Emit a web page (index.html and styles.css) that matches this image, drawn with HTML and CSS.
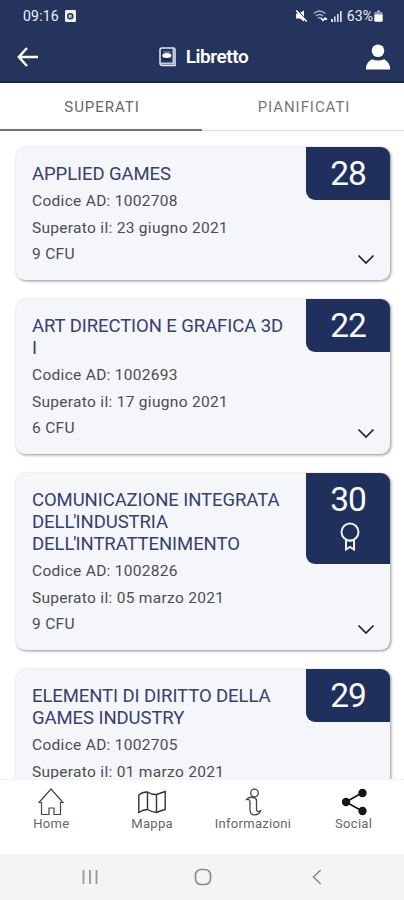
FILE: index.html
```html
<!DOCTYPE html>
<html lang="it">
<head>
<meta charset="utf-8">
<meta name="viewport" content="width=device-width, initial-scale=1">
<title>Libretto</title>
<link rel="stylesheet" href="styles.css">
</head>
<body>
<div class="app">
  <header class="header">
    <div class="status">
      <span class="time">09:16</span>
      <svg class="status-app" width="11" height="12" viewBox="0 0 11 12"><rect width="11" height="12" rx="1.2" fill="#edf0f8"/><circle cx="5.3" cy="6.2" r="2.5" fill="none" stroke="#25345c" stroke-width="1.5"/><circle cx="5.8" cy="6.2" r=".7" fill="#25345c"/></svg>
      <div class="status-right">
        <svg width="13" height="12" viewBox="0 0 13 12"><path d="M1 3.500h2.500L9 .5v11L5 8.500H1z" fill="#fff"/><path d="M2.500.5l10.500 11" stroke="#25345c" stroke-width="1.200"/><path d="M1.200.5l10.500 11" stroke="#fff" stroke-width="1.600"/></svg>
        <svg class="wifi" width="15" height="12" viewBox="0 0 15 12" fill="none" stroke="#aeb8cf" stroke-width="1.300"><path d="M.8 3.500Q6.500-1.500 12.300 3.500M3 6q3.500-3 7 0M5 8.300q1.500-1.400 3 0"/><path d="M8 8l2 2.500 2-2.500 2 1.500" stroke="#eef1f8" stroke-width="1.600"/></svg>
        <svg class="signal" width="11" height="12" viewBox="0 0 11 12" fill="#d6dcea"><path d="M0 9h2v3H0zM3 6.500h1.600V12H3zM6 4h1.600v8H6zM9 1h1.700v11H9z"/></svg>
        <span class="percent">63%</span>
        <svg class="battery" width="9" height="12" viewBox="0 0 9 12"><path d="M3 .5h3v2H3z" fill="#aeb8cf"/><rect x=".3" y="2" width="8.400" height="4" rx="1" fill="#8794b5"/><rect x=".3" y="4.500" width="8.400" height="7.300" rx="1" fill="#fff"/></svg>
      </div>
    </div>
    <div class="titlebar">
      <svg class="back" width="22" height="20" viewBox="0 0 22 20" fill="none" stroke="#fff" stroke-width="2.400"><path d="M10 1L1.800 10l8.200 9M2 10h19"/></svg>
      <div class="heading">
        <svg width="17" height="20" viewBox="0 0 17 20"><path d="M3 1h11.500q1.500 0 1.500 1.500V18.500H3.500Q1 18.500 1 16V3q0-2 2-2z" fill="#25345c" stroke="#e5e9f3" stroke-width="1.500"/><path d="M1.500 16.500H15M14.500 1v16" stroke="#c0c8db" stroke-width="2" fill="none"/><path d="M4.500 5h7" stroke="#9ba7c2"/><ellipse cx="7.800" cy="8.500" rx="4.500" ry="2.500" fill="#fff"/><path d="M4 12.200h8" stroke="#17234a" stroke-width="1.500"/></svg>
        <h1>Libretto</h1>
      </div>
      <svg class="user" width="24" height="26" viewBox="0 0 24 26" fill="#fff"><circle cx="12" cy="6.700" r="6.300"/><path d="M0 25.500v-2.500q1-5 6-7.800 6 2.500 12 0 5 2.800 6 7.800v2.500z"/></svg>
    </div>
  </header>
  <nav class="tabs">
    <div class="tab active"><span>SUPERATI</span></div>
    <div class="tab"><span>PIANIFICATI</span></div>
  </nav>
  <main class="list">
    <article class="card">
      <div class="info">
        <h2>APPLIED GAMES</h2>
        <p>Codice AD: 1002708</p><p>Superato il: 23 giugno 2021</p><p>9 CFU</p>
      </div>
      <div class="side">
        <div class="grade">28</div>
        <svg class="chevron" width="18" height="11" viewBox="0 0 18 11"><path d="M1.500 1.500L9 9l7.500-7.500"/></svg>
      </div>
    </article>
    <article class="card">
      <div class="info">
        <h2>ART DIRECTION E GRAFICA 3D<br>I</h2>
        <p>Codice AD: 1002693</p><p>Superato il: 17 giugno 2021</p><p>6 CFU</p>
      </div>
      <div class="side">
        <div class="grade">22</div>
        <svg class="chevron" width="18" height="11" viewBox="0 0 18 11"><path d="M1.500 1.500L9 9l7.500-7.500"/></svg>
      </div>
    </article>
    <article class="card">
      <div class="info">
        <h2>COMUNICAZIONE INTEGRATA<br>DEL<span class="elision">L'</span>INDUSTRIA<br>DEL<span class="elision">L'</span>INTRATTENIMENTO</h2>
        <p>Codice AD: 1002826</p><p>Superato il: 05 marzo 2021</p><p>9 CFU</p>
      </div>
      <div class="side">
        <div class="grade honors">30
          <svg class="ribbon" width="20" height="30" viewBox="0 0 20 30" fill="none" stroke="#edf0f8" stroke-width="2"><circle cx="10" cy="10" r="8.500"/><path d="M6 17.500v10l4-2.500 4 2.500V17.500"/><path d="M7.500 18.800h5" stroke-width="1.500"/></svg>
        </div>
        <svg class="chevron" width="18" height="11" viewBox="0 0 18 11"><path d="M1.500 1.500L9 9l7.500-7.500"/></svg>
      </div>
    </article>
    <article class="card">
      <div class="info">
        <h2>ELEMENTI DI DIRITTO DELLA<br>GAMES INDUSTRY</h2>
        <p>Codice AD: 1002705</p><p>Superato il: 01 marzo 2021</p>
      </div>
      <div class="side"><div class="grade">29</div></div>
    </article>
  </main>
  <nav class="bottom">
    <div class="item"><svg width="26" height="28" viewBox="0 0 26 28" fill="none" stroke="#444" stroke-width="1.200"><path d="M1 14.500L13 1l12 13.500h-2.500V26.500H16v-6.500h-5v6.500H3.500V14.500z"/></svg><span>Home</span></div>
    <div class="item"><svg width="28" height="28" viewBox="0 0 28 28" fill="none" stroke="#333" stroke-width="1.400"><path d="M.8 7q4-3.500 8.700-3 4.500 3 9 2.500Q23 5 27.200 3.500V21.500q-4 1-8.700 3-4.500-.5-9-3Q5 21.500.8 24.500zM9.500 4v17.500M18.500 6.500v18"/></svg><span>Mappa</span></div>
    <div class="item"><svg width="18" height="28" viewBox="0 0 18 28" fill="none" stroke="#444" stroke-width="1.300"><circle cx="10.500" cy="5" r="3.800"/><path d="M9 9.500Q4.500 8.500 2.500 11.500q3.500-.5 3.500 2v8.500q0 5 5 4.800 4 0 5.500-4-4 1.800-4-1.500v-8.500q0-3-3.500-3.300z"/></svg><span>Informazioni</span></div>
    <div class="item"><svg width="28" height="28" viewBox="0 0 28 28" fill="#151515"><path d="M22.500 4.500L6 14l17 9.500" fill="none" stroke="#151515" stroke-width="1.700"/><circle cx="22.500" cy="5" r="4.200"/><circle cx="6" cy="14" r="4.200"/><circle cx="22.500" cy="23" r="4.200"/></svg><span>Social</span></div>
  </nav>
  <footer class="system">
    <svg width="16" height="16" viewBox="0 0 16 16" stroke="#999" stroke-width="1.800"><path d="M1.500 1v14M8 1v14M14.500 1v14"/></svg>
    <svg width="18" height="18" viewBox="0 0 18 18" fill="none" stroke="#8b8b8b" stroke-width="1.700"><rect x="1.500" y="1.500" width="15" height="15" rx="5.500"/></svg>
    <svg width="10" height="16" viewBox="0 0 10 16" fill="none" stroke="#8b8b8b" stroke-width="1.600"><path d="M8.700 1L1.500 8l7.200 7"/></svg>
  </footer>
</div>
</body>
</html>
```
FILE: styles.css
```css
* { box-sizing: border-box; }
body { margin: 0; background: #fff; font-family: Roboto, "Liberation Sans", sans-serif; }
svg { display: block; flex: none; }
h1, h2, p { margin: 0; font-weight: 400; white-space: nowrap; }
.app { width: 404px; height: 900px; display: flex; flex-direction: column; overflow: hidden; }
.header { flex: none; height: 83px; background: #25345c; border-bottom: 2px solid #162154; color: #fff; }
.status { display: flex; align-items: center; height: 31px; padding: 0 21px 0 23px; font-size: 14px; color: #edf0f8; }
.time { letter-spacing: .2px; }
.status-app { margin-left: 6px; }
.status-right { display: flex; align-items: center; margin-left: auto; }
.wifi { margin-left: 5px; }
.signal { margin-left: 3px; }
.percent { margin-left: 5px; letter-spacing: .1px; }
.battery { margin-left: 1px; }
.titlebar { display: grid; grid-template-columns: 60px 1fr 60px; align-items: center; height: 52px; padding: 0 14px 0 17px; }
.heading { display: flex; align-items: center; justify-content: center; gap: 10px; }
.heading h1 { font-size: 19px; font-weight: 600; line-height: 24px; letter-spacing: -.45px; }
.user { justify-self: end; }
.tabs { flex: none; display: flex; height: 48px; border-bottom: 1px solid #ddd; }
.tab { flex: 1; display: flex; align-items: center; justify-content: center; padding: 1px 0 0 2px; font-size: 15px; color: #777; letter-spacing: .95px; }
.tab.active { color: #666; height: 48px; padding-top: 2px; border-bottom: 2px solid #6d727e; }
.list { flex: 1; min-height: 0; display: flex; flex-direction: column; gap: 19px; padding: 16px 14px 0 16px; overflow: hidden; }
.card { flex: none; display: flex; justify-content: space-between; border-radius: 9px; background: #f4f6fa; box-shadow: 1px 1px 3px #898d96; overflow: hidden; }
.info { padding: 16px 0 12.500px 16px; }
.info h2 { margin-bottom: 3px; font-size: 18.500px; line-height: 22px; color: #36406e; letter-spacing: -.08px; }
.elision { letter-spacing: -1px; }
.info p { font-size: 15.500px; line-height: 26.500px; color: #4c4d50; letter-spacing: .3px; }
.side { display: flex; flex-direction: column; justify-content: space-between; width: 84px; }
.grade { height: 53px; border-bottom-left-radius: 9px; background: #20305d; color: #f8f9fc; font-size: 33.500px; line-height: 53px; letter-spacing: -1px; text-align: center; }
.grade.honors { height: 91px; }
.ribbon { margin: -4px 30px 0 34px; }
.chevron { margin: 0 15px 15px auto; fill: none; stroke: #222; stroke-width: 1.700; }
.bottom { flex: none; display: grid; grid-template-columns: repeat(4, 1fr); height: 75px; border-top: 1px solid #f3f3f3; padding: 8px 0 0 1px; background: #fff; }
.item { display: flex; flex-direction: column; align-items: center; color: #666; font-size: 13px; line-height: 16px; letter-spacing: .3px; }
.system { flex: none; display: grid; grid-template-columns: 180px 46px 182px; justify-items: center; align-items: center; height: 46px; background: #f4f4f4; }
```
